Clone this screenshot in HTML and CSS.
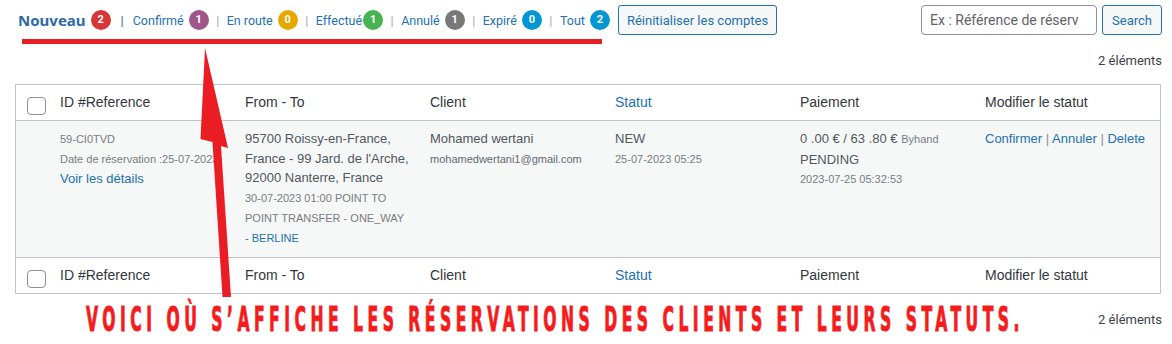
FILE: index.html
```html
<!DOCTYPE html>
<html lang="fr">
<head>
    <meta charset="UTF-8">
    <meta name="viewport" content="width=device-width, initial-scale=1.0">
    <title>Réservations</title>
    <link rel="stylesheet" href="styles.css">
</head>
<body>
    <div class="page">
        <div class="topbar">
            <ul class="status-links">
                <li><a href="#" class="current">Nouveau</a><span class="count red">2</span></li>
                <li class="sep first">|</li>
                <li><a href="#">Confirmé</a><span class="count purple">1</span></li>
                <li class="sep">|</li>
                <li><a href="#">En route</a><span class="count yellow">0</span></li>
                <li class="sep">|</li>
                <li><a href="#">Effectué</a><span class="count green tight">1</span></li>
                <li class="sep">|</li>
                <li><a href="#">Annulé</a><span class="count grey">1</span></li>
                <li class="sep">|</li>
                <li><a href="#">Expiré</a><span class="count blue">0</span></li>
                <li class="sep">|</li>
                <li><a href="#">Tout</a><span class="count blue">2</span></li>
            </ul>
            <button class="button reset-button">Réinitialiser les comptes</button>
            <form class="search-box">
                <input type="text" class="search-input" placeholder="Ex : Référence de réserv">
                <button type="submit" class="button">Search</button>
            </form>
        </div>

        <div class="items-count">2 éléments</div>

        <table class="bookings">
            <colgroup>
                <col class="col-check">
                <col><col><col><col><col><col>
            </colgroup>
            <thead>
                <tr>
                    <td class="check-cell"><span class="checkbox"></span></td>
                    <th>ID #Reference</th>
                    <th>From - To</th>
                    <th>Client</th>
                    <th><a href="#">Statut</a></th>
                    <th>Paiement</th>
                    <th>Modifier le statut</th>
                </tr>
            </thead>
            <tbody>
                <tr>
                    <td class="check-cell"></td>
                    <td>
                        <div class="meta">59-CI0TVD</div>
                        <div class="meta nowrap">Date de réservation :25-07-2023</div>
                        <a href="#">Voir les détails</a>
                    </td>
                    <td>
                        <div>95700 Roissy-en-France,<br>France - 99 Jard. de l'Arche,<br>92000 Nanterre, France</div>
                        <div class="meta">30-07-2023 01:00 POINT TO<br>POINT TRANSFER - ONE_WAY<br><a href="#">- BERLINE</a></div>
                    </td>
                    <td>
                        <div>Mohamed wertani</div>
                        <div class="meta email">mohamedwertani1@gmail.com</div>
                    </td>
                    <td>
                        <div>NEW</div>
                        <div class="meta">25-07-2023 05:25</div>
                    </td>
                    <td>
                        <div>0 .00 € / 63 .80 € <span class="small">Byhand</span></div>
                        <div>PENDING</div>
                        <div class="meta">2023-07-25 05:32:53</div>
                    </td>
                    <td class="actions">
                        <a href="#">Confirmer</a> <span class="bar">|</span> <a href="#">Annuler</a> <span class="bar">|</span> <a href="#">Delete</a>
                    </td>
                </tr>
            </tbody>
            <tfoot>
                <tr>
                    <td class="check-cell"><span class="checkbox"></span></td>
                    <th>ID #Reference</th>
                    <th>From - To</th>
                    <th>Client</th>
                    <th><a href="#">Statut</a></th>
                    <th>Paiement</th>
                    <th>Modifier le statut</th>
                </tr>
            </tfoot>
        </table>

        <div class="bottom-row">
            <div class="caption"><span>VOICI OÙ S’AFFICHE LES RÉSERVATIONS DES CLIENTS ET LEURS STATUTS.</span></div>
            <div class="items-count bottom">2 éléments</div>
        </div>
    </div>

    <!-- annotation drawn over the screenshot -->
    <svg class="annotation" width="1172" height="344" viewBox="0 0 1172 344">
        <rect x="22" y="39" width="580" height="5" fill="#ea1c24"/>
        <polygon points="205,48 228,148 221,146 231,297 222.5,297 212.5,142 200.5,139" fill="#ea1c24"/>
    </svg>
</body>
</html>
```

FILE: styles.css
```css
html, body {
    overflow: hidden;
}
body {
    margin: 0;
    font-family: Roboto, "Noto Sans", sans-serif;
    color: #3c434a;
    background: #fff;
    position: relative;
}
a {
    color: #2271b1;
    text-decoration: none;
}
.page {
    padding: 5px 10px 0 15px;
}
.topbar {
    display: flex;
    align-items: center;
    height: 30px;
}
.status-links {
    display: flex;
    align-items: center;
    list-style: none;
    margin: 0 0 0 3px;
    padding: 0;
    font-size: 12.5px;
}
.status-links li {
    display: flex;
    align-items: center;
}
.status-links a.current {
    font-family: "Noto Sans", sans-serif;
    font-size: 15px;
    font-weight: 700;
    color: #2c6aa6;
}
.sep {
    margin: 0 7.5px;
    color: #a0a5aa;
}
.sep.first {
    margin: 0 9px 0 10px;
    color: #4f6f94;
    font-weight: 700;
}
.count {
    width: 20px;
    height: 20px;
    border-radius: 50%;
    margin-left: 5px;
    color: #fff;
    font-size: 11px;
    font-weight: 700;
    line-height: 20px;
    text-align: center;
}
.count.tight { margin-left: 1px; }
.red { background: #d63638; }
.purple { background: #a0568a; }
.yellow { background: #e6a800; }
.green { background: #46b450; }
.grey { background: #787878; }
.blue { background: #0496d3; }
.button {
    box-sizing: border-box;
    height: 30px;
    padding: 0 9px;
    border: 1px solid #2271b1;
    border-radius: 3px;
    background: #f6f7f7;
    color: #2271b1;
    font-family: Roboto, sans-serif;
    font-size: 13px;
    cursor: pointer;
}
.reset-button {
    margin-left: 8px;
    padding: 0 8px;
}
.search-box {
    display: flex;
    margin: 0 0 0 auto;
}
.search-input {
    box-sizing: border-box;
    width: 176px;
    height: 30px;
    margin-right: 5px;
    padding: 0 8px;
    border: 1px solid #8c8f94;
    border-radius: 4px;
    font-family: Roboto, sans-serif;
    font-size: 14px;
    color: #50575e;
}
.search-input::placeholder {
    color: #5f6368;
}
.items-count {
    margin-top: 16px;
    text-align: right;
    font-size: 13px;
    line-height: 20px;
    color: #3c434a;
}
.bookings {
    width: 1146px;
    margin-top: 13px;
    table-layout: fixed;
    border-collapse: separate;
    border-spacing: 0;
    border: 1px solid #c3c4c7;
    font-family: "Liberation Sans", Arial, sans-serif;
    font-size: 13px;
    line-height: 19.5px;
    color: #50575e;
}
.col-check {
    width: 34px;
}
.bookings th {
    padding: 7px 10px 8px;
    font-size: 14px;
    font-weight: normal;
    line-height: 20px;
    text-align: left;
    vertical-align: top;
    color: #32373c;
    background: #fff;
}
.bookings thead th,
.bookings thead td {
    border-bottom: 1px solid #c3c4c7;
}
.bookings tfoot th,
.bookings tfoot td {
    border-top: 1px solid #c3c4c7;
}
.bookings tbody td {
    padding: 8px 10px 9.5px;
    vertical-align: top;
    background: #f6f7f7;
}
.bookings .check-cell {
    padding: 12px 0 0 11px;
    vertical-align: top;
}
.bookings tbody .check-cell {
    padding: 0;
}
.checkbox {
    display: block;
    box-sizing: border-box;
    width: 19px;
    height: 18px;
    border: 1px solid #8c8f94;
    border-radius: 4px;
    background: #fff;
}
.meta {
    font-size: 11px;
    line-height: 20px;
    color: #787c82;
}
.meta.email {
    color: #646970;
}
.nowrap {
    white-space: nowrap;
}
.small {
    font-size: 11px;
    color: #787c82;
}
.bar {
    color: #8c8f94;
}
.bottom-row {
    display: flex;
    width: 1147px;
    margin-top: 8px;
}
.caption {
    height: 34px;
    margin-left: 71px;
    white-space: nowrap;
    font-family: "DejaVu Sans Condensed", "DejaVu Sans", sans-serif;
    font-stretch: condensed;
    font-weight: 700;
    font-size: 34px;
    line-height: 34px;
    color: #f41c1c;
}
.caption span {
    display: inline-block;
    margin-right: -900px; /* the box keeps its unscaled width */
    letter-spacing: 8.8px;
    -webkit-text-stroke: 1px #f41c1c;
    transform: scaleX(0.51);
    transform-origin: left top;
}
.items-count.bottom {
    margin: 8px 0 0 auto;
}
.annotation {
    position: absolute;
    top: 0;
    left: 0;
    pointer-events: none;
}
```
